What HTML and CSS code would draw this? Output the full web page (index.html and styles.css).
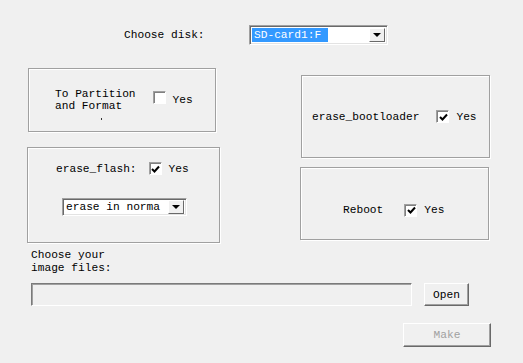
FILE: index.html
```html
<!DOCTYPE html>
<html lang="en">
<head>
  <meta charset="UTF-8">
  <meta name="viewport" content="width=device-width, initial-scale=1.0">
  <title>Make image</title>
  <link rel="stylesheet" href="styles.css">
</head>
<body>
  <div class="dialog">
    <div class="disk-row">
      <span class="disk-label">Choose disk:</span>
      <div class="combo">
        <span class="combo-value selected">SD-card1:F</span>
        <span class="arrow-btn"><span class="arrow"></span></span>
      </div>
    </div>

    <div class="panels">
      <div class="col-left">
        <div class="group group-format">
          <span class="text-two">To Partition<br>and Format</span>
          <span class="check nudge"></span>
          <span class="yes">Yes</span>
          <span class="dot"></span>
        </div>
        <div class="group group-flash">
          <div class="row">
            <span>erase_flash:</span>
            <span class="check checked"><svg viewBox="0 0 9 9" width="9" height="9"><path d="M1 4 L3.5 6.5 L8 1.5" fill="none" stroke="#000" stroke-width="2"/></svg></span>
            <span class="yes">Yes</span>
          </div>
          <div class="combo combo-small">
            <span class="combo-value">erase in norma</span>
            <span class="arrow-btn"><span class="arrow"></span></span>
          </div>
        </div>
      </div>

      <div class="col-right">
        <div class="group group-boot">
          <span>erase_bootloader</span>
          <span class="check checked"><svg viewBox="0 0 9 9" width="9" height="9"><path d="M1 4 L3.5 6.5 L8 1.5" fill="none" stroke="#000" stroke-width="2"/></svg></span>
          <span class="yes">Yes</span>
        </div>
        <div class="group group-reboot">
          <span>Reboot</span>
          <span class="check checked reboot-check"><svg viewBox="0 0 9 9" width="9" height="9"><path d="M1 4 L3.5 6.5 L8 1.5" fill="none" stroke="#000" stroke-width="2"/></svg></span>
          <span class="yes">Yes</span>
        </div>
      </div>
    </div>

    <div class="files">
      <div class="files-label">Choose your<br>image files:</div>
      <div class="file-row">
        <div class="file-field"></div>
        <button class="btn btn-open">Open</button>
      </div>
      <button class="btn btn-make" disabled>Make</button>
    </div>
  </div>
</body>
</html>
```

FILE: styles.css
```css
body {
  margin: 0;
  width: 523px;
  height: 363px;
  background-color: #f0f0f0;
  font-family: "Liberation Mono", "DejaVu Sans Mono", monospace;
  font-size: 11.2px;
  color: #000;
  overflow: hidden;
}
.dialog {
  padding-top: 25px;
}
.disk-row {
  display: flex;
  align-items: center;
  height: 20px;
  padding-left: 124px;
}
.disk-label {
  width: 125px;
}
.combo {
  display: flex;
  align-items: center;
  justify-content: space-between;
  box-sizing: border-box;
  width: 139px;
  height: 20px;
  background-color: #fff;
  border: 1px solid;
  border-color: #a0a0a0 #fff #fff #a0a0a0;
  box-shadow: inset 1px 1px #696969, inset -1px -1px #e3e3e3;
  padding: 2px;
}
.combo-value {
  padding: 0 2px;
  line-height: 14px;
  white-space: nowrap;
  overflow: hidden;
}
.selected {
  background-color: #3399ff;
  color: #fff;
  width: 72px;
}
.arrow-btn {
  display: flex;
  align-items: center;
  justify-content: center;
  box-sizing: border-box;
  width: 16px;
  height: 14px;
  background-color: #f0f0f0;
  border: 1px solid;
  border-color: #fff #696969 #696969 #fff;
}
.arrow {
  width: 0;
  height: 0;
  border-left: 4px solid transparent;
  border-right: 4px solid transparent;
  border-top: 4px solid #000;
}

.panels {
  display: flex;
  align-items: flex-start;
  margin-top: 23px;
}
.col-left {
  display: flex;
  flex-direction: column;
  margin-left: 27px;
  width: 193px;
}
.col-right {
  display: flex;
  flex-direction: column;
  margin-left: 81px;
  margin-top: 7px;
}
.group {
  position: relative;
  box-sizing: border-box;
  border: 1px solid #a0a0a0;
  box-shadow: inset 1px 1px #fff, 1px 1px #fff;
  display: flex;
  align-items: center;
}
.group-format {
  margin-left: 1px;
  width: 188px;
  height: 64px;
  padding-left: 26px;
}
.text-two {
  line-height: 12px;
  margin-right: 17px;
}
.nudge {
  margin-bottom: 5px;
}
.dot {
  position: absolute;
  left: 72px;
  top: 49px;
  width: 1px;
  height: 2px;
  background-color: #333;
}
.group-flash {
  margin-top: 15px;
  width: 193px;
  height: 96px;
  flex-direction: column;
  align-items: flex-start;
  padding-top: 14px;
}
.row {
  display: flex;
  align-items: center;
  padding-left: 28px;
}
.row .check {
  margin-left: 12px;
}
.combo-small {
  margin-top: 23px;
  margin-left: 34px;
  width: 125px;
  height: 18px;
  padding: 1px 2px;
}
.combo-small .combo-value {
  padding: 0 1px;
  width: 102px;
}
.group-boot {
  width: 189px;
  height: 83px;
  padding-left: 10px;
}
.group-boot .check {
  margin-left: 17px;
}
.group-reboot {
  margin-top: 9px;
  margin-left: -1px;
  width: 189px;
  height: 73px;
  padding-left: 42px;
  padding-top: 13px;
}
.reboot-check {
  margin-left: 21px;
}
.check {
  display: inline-flex;
  align-items: center;
  justify-content: center;
  box-sizing: border-box;
  width: 13px;
  height: 13px;
  background-color: #fff;
  border: 1px solid;
  border-color: #a0a0a0 #fff #fff #a0a0a0;
  box-shadow: inset 1px 1px #808080;
}
.check svg {
  margin: 1px 0 0 1px;
}
.yes {
  margin-left: 7px;
}

.files {
  margin-top: 6px;
  padding-left: 31px;
}
.files-label {
  line-height: 13px;
}
.file-row {
  display: flex;
  align-items: center;
  margin-top: 8px;
}
.file-field {
  box-sizing: border-box;
  width: 381px;
  height: 23px;
  border: 1px solid;
  border-color: #7a7a7a #fff #fff #7a7a7a;
  box-shadow: inset 1px 1px #a0a0a0;
  background-color: #f0f0f0;
}
.btn {
  box-sizing: border-box;
  font-family: inherit;
  font-size: inherit;
  background-color: #f0f0f0;
  color: #000;
  border: 1px solid;
  border-color: #fff #696969 #696969 #fff;
  box-shadow: inset -1px -1px #a0a0a0;
  padding: 0;
}
.btn-open {
  margin-left: 12px;
  width: 45px;
  height: 23px;
}
.btn-make {
  display: block;
  margin-top: 17px;
  margin-left: 372px;
  width: 88px;
  height: 24px;
  color: #a0a0a0;
}
```
